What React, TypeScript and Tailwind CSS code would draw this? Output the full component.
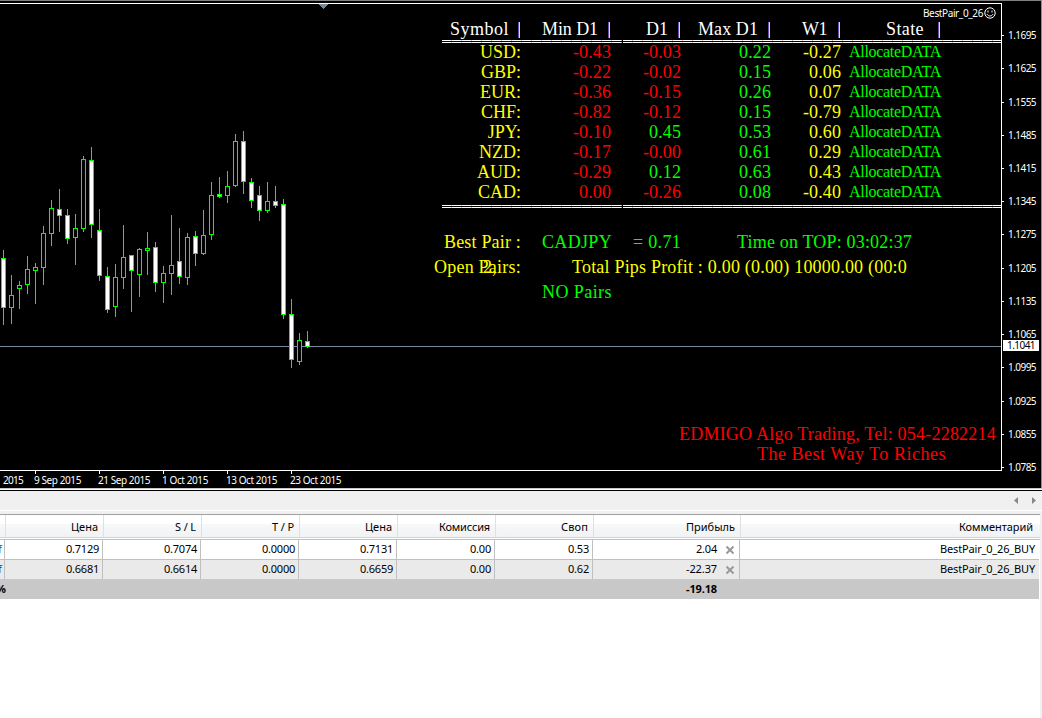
import { useLayoutEffect, useRef } from "react";

const candles = [
  [250, 325, 258, 308, 1], [275, 324, 295, 308, 0], [281, 309, 285, 289, 0], [256, 294, 269, 285, 0],
  [263, 304, 267, 271, 0], [226, 285, 233, 268, 0], [200, 246, 208, 234, 0], [189, 232, 209, 216, 1],
  [209, 244, 215, 239, 1], [214, 265, 228, 238, 0], [156, 232, 159, 229, 0], [147, 238, 160, 225, 1],
  [209, 281, 230, 276, 1], [267, 313, 276, 310, 1], [264, 317, 277, 307, 0], [225, 289, 257, 278, 0],
  [255, 312, 255, 271, 1], [248, 297, 249, 275, 0], [232, 275, 248, 251, 0], [242, 292, 247, 283, 1],
  [266, 303, 273, 283, 0], [215, 295, 265, 274, 0], [228, 284, 261, 277, 1], [233, 285, 237, 278, 0],
  [231, 266, 236, 254, 1], [210, 255, 235, 254, 0], [182, 240, 195, 235, 0], [177, 198, 194, 197, 1],
  [171, 203, 186, 196, 0], [134, 187, 141, 186, 0], [131, 194, 141, 182, 1], [178, 208, 182, 201, 1],
  [186, 221, 195, 211, 1], [182, 213, 201, 211, 0], [186, 208, 201, 206, 1], [199, 319, 204, 315, 1],
  [299, 368, 314, 360, 1], [333, 365, 340, 362, 0], [331, 348, 341, 347, 1],
];

const prices = ["1.1695", "1.1625", "1.1555", "1.1485", "1.1415", "1.1345", "1.1275", "1.1205", "1.1135", "1.1065", "1.0995", "1.0925", "1.0855", "1.0785"];
const rows = [
  ["USD:", "-0.43", "-0.03", "0.22", "-0.27"],
  ["GBP:", "-0.22", "-0.02", "0.15", "0.06"],
  ["EUR:", "-0.36", "-0.15", "0.26", "0.07"],
  ["CHF:", "-0.82", "-0.12", "0.15", "-0.79"],
  ["JPY:", "-0.10", "0.45", "0.53", "0.60"],
  ["NZD:", "-0.17", "-0.00", "0.61", "0.29"],
  ["AUD:", "-0.29", "0.12", "0.63", "0.43"],
  ["CAD:", "0.00", "-0.26", "0.08", "-0.40"],
];

/* Text tracked so that its advance fills exactly `w` pixels. */
function Fit({ w, children, className = "" }: { w: number; children: string; className?: string }) {
  const ref = useRef<HTMLSpanElement>(null);
  useLayoutEffect(() => {
    const el = ref.current!;
    el.style.letterSpacing = "0px";
    const natural = el.getBoundingClientRect().width;
    el.style.letterSpacing = `${(w - natural) / children.length}px`;
  }, [w, children]);
  return <span ref={ref} className={`inline-block shrink-0 whitespace-pre ${className}`}>{children}</span>;
}

function Head({ w, label, gap }: { w: number; label: string; gap: number }) {
  return (
    <div className="flex h-full items-center justify-end">
      <Fit w={w}>{label}</Fit>
      <span className="shrink-0" style={{ width: gap - 1 }} />
      <span className="mr-px mt-[2px] h-4 w-[2px] shrink-0 border-l border-r border-l-[#6a4fae] border-r-[#e6dcc0]" />
    </div>
  );
}

const dashes = "h-px bg-[repeating-linear-gradient(90deg,#fff_0_9px,#c9b9ad_9px_10px)]";

function Rule() {
  return (
    <div className="flex h-[3px] gap-px pl-[442px]">
      <div className="flex w-[180px] flex-col justify-between">
        <div className={dashes} />
        <div className={dashes} />
      </div>
      <div className="flex flex-1 flex-col justify-between">
        <div className={dashes} />
        <div className={dashes} />
      </div>
    </div>
  );
}

const cols = "grid grid-cols-[521px_90px_70px_90px_70px_100px] items-center";

function Panel() {
  return (
    <div className="relative w-[1001px] pt-[15px] font-['Liberation_Serif','Times_New_Roman',serif] text-[18px] leading-5">
      <div className={`${cols} mb-px h-5 text-white`}>
        <Head w={59} label="Symbol" gap={10} />
        <Head w={56} label="Min D1" gap={11} />
        <Head w={22} label="D1" gap={11} />
        <Head w={60} label="Max D1" gap={11} />
        <Head w={25} label="W1" gap={12} />
        <Head w={38} label="State" gap={15} />
      </div>
      <Rule />
      <div className="-mt-px h-[162px]">
        {rows.map((r) => (
          <div key={r[0]} className={`${cols} h-5 text-right`}>
            <span className="text-[#ffff00]">{r[0]}</span>
            <span className="text-[#ff0000]"><Fit w={r[1][0] === "-" ? 38 : 32}>{r[1]}</Fit></span>
            <span className={r[2] === "0.45" || r[2] === "0.12" ? "text-[#00ff00]" : "text-[#ff0000]"}>
              <Fit w={r[2][0] === "-" ? 38 : 32}>{r[2]}</Fit>
            </span>
            <span className="text-[#00ff00]"><Fit w={32}>{r[3]}</Fit></span>
            <span className="text-[#ffff00]"><Fit w={r[4][0] === "-" ? 38 : 32}>{r[4]}</Fit></span>
            <span className="text-[16px] text-[#00ff00]"><Fit w={92}>AllocateDATA</Fit></span>
          </div>
        ))}
      </div>
      <div className="mt-px"><Rule /></div>
      <div className="mt-6 flex h-5 text-[#00ff00]">
        <span className="w-[541px] pl-[444px] text-[#ffff00]"><Fit w={77}>Best Pair :</Fit></span>
        <span className="w-[92px] pl-px"><Fit w={70}>CADJPY</Fit></span>
        <span className="w-[104px]"><Fit w={48}>= 0.71</Fit></span>
        <Fit w={175}>Time on TOP: 03:02:37</Fit>
      </div>
      <div className="mt-[5px] flex h-5 text-[#ffff00]">
        <span className="relative w-[572px] pl-[434px]">
          <Fit w={87}>Open Pairs:</Fit>
          <span className="absolute left-[483px] top-0">2,</span>
        </span>
        <Fit w={335}>Total Pips Profit : 0.00 (0.00) 10000.00 (00:0</Fit>
      </div>
      <div className="mt-[5px] flex h-5 pl-[542px] text-[#00ff00]"><Fit w={70}>NO Pairs</Fit></div>
      <div className="mt-[122px] flex h-5 pl-[679px] text-[#ff0000]"><Fit w={317}>EDMIGO Algo Trading, Tel: 054-2282214</Fit></div>
      <div className="flex h-5 pl-[757px] text-[#ff0000]"><Fit w={189}>The Best Way To Riches</Fit></div>
    </div>
  );
}

function Chart() {
  return (
    <div className="relative h-[467px] w-[1002px] shrink-0 overflow-hidden border-b border-r border-white">
      <svg className="absolute left-0 top-0" width="1001" height="466" viewBox="0 4 1001 466" shapeRendering="crispEdges">
        <path d="M318 4h11l-5.500 5z" fill="#778899" />
        <rect x="0" y="346" width="1001" height="1" fill="#778899" />
        {candles.map(([h, l, t, b, full], i) => (
          <g key={i}>
            <rect x={3 + i * 8} y={h} width="1" height={l - h} fill="#00ff00" />
            <rect x={1 + i * 8} y={t} width="5" height={b - t} fill="#00ff00" />
            <rect x={2 + i * 8} y={t + 1} width="3" height={b - t - 2} fill={full ? "#fff" : "#000"} />
          </g>
        ))}
      </svg>
      <div className="absolute right-[5px] top-[3px] flex items-center gap-px text-[10px] leading-3 text-white">
        <Fit w={60}>BestPair_0_26</Fit>
        <svg width="12" height="12" viewBox="0 0 12 12" fill="none" stroke="#fff">
          <circle cx="6" cy="6" r="5.200" />
          <path d="M4 3.500v2M8 3.500v2M3 7.200c1.500 2.400 4.500 2.400 6 0" />
        </svg>
      </div>
      <Panel />
    </div>
  );
}

function PriceAxis() {
  return (
    <div className="relative flex-1 pt-[15px] text-[10px] text-white">
      {prices.map((p) => (
        <div key={p} className="flex h-[33.230px] items-center">
          <span className="mr-[4px] h-px w-[2px] bg-white" />
          <Fit w={28} className="leading-[9px]">{p}</Fit>
        </div>
      ))}
      <div className="absolute left-px top-[336px] flex h-[11px] w-9 items-center bg-white pl-1 text-black"><Fit w={28} className="leading-[9px]">1.1041</Fit></div>
    </div>
  );
}

const dates: [string, number][] = [["9 Sep 2015", 47], ["21 Sep 2015", 52], ["1 Oct 2015", 46], ["13 Oct 2015", 51], ["23 Oct 2015", 51]];

const headers: [string, number][] = [["Цена", 27], ["S / L", 21], ["T / P", 22], ["Цена", 27], ["Комиссия", 51], ["Своп", 27], ["Прибыль", 49], ["Комментарий", 74]];
const trades = [
  ["0.7129", "0.7074", "0.0000", "0.7131", "0.00", "0.53", "2.04"],
  ["0.6681", "0.6614", "0.0000", "0.6659", "0.00", "0.62", "-22.37"],
];
const tcols = "grid grid-cols-[98px_98px_98px_98px_98px_98px_147px_299px]";

function Cross() {
  return (
    <svg width="8" height="8" viewBox="0 0 8 8" className="mx-[5px] shrink-0" stroke="#999" strokeWidth="2">
      <path d="M.5 .5l7 7M7.500 .5l-7 7" />
    </svg>
  );
}

function Terminal() {
  return (
    <div className="flex h-[204px] w-[1040px] flex-col border-t border-[#a0a0a0] bg-white text-[11px] text-black">
      <div className={`${tcols} h-[22px] bg-[linear-gradient(#fff_40%,#f7f8fa_41%,#f1f2f4)] pl-[6px]`}>
        {headers.map(([h, w], i) => (
          <div key={i} className={`flex items-center justify-end border-[#dfe0e3] pt-0.5 ${i === 7 ? "pr-[7px]" : "border-r pr-[5px]"} ${i === 0 ? "-ml-px border-l" : ""}`}>
            <Fit w={w}>{h}</Fit>
          </div>
        ))}
      </div>
      <div className="h-[3px] border-b border-t border-b-[#c0c0c0] border-t-[#d5d5d5] bg-white" />
      {trades.map((t, r) => (
        <div key={r} className={`flex w-[1039px] ${r ? "h-[19px] bg-[#eaeaea]" : "h-5 border-b border-[#c0c0c0]"}`}>
          <div className="flex w-[5px] items-center overflow-hidden border-r border-[#c0c0c0] text-[#238]">
            <span className="-ml-[2px]">f</span>
          </div>
          <div className="grid flex-1 grid-cols-[98px_98px_98px_98px_98px_98px_147px_299px]">
            {t.map((v, i) => (
              <div key={i} className={`flex items-center justify-end border-r border-[#c0c0c0] ${i === 6 ? "" : "pr-[3px]"}`}>
                <Fit w={v.length === 6 && i < 6 ? 33 : v.length === 6 ? 31 : 21}>{v}</Fit>
                {i === 6 && <span className="pl-1"><Cross /></span>}
              </div>
            ))}
            <div className="flex items-center justify-end pr-1"><Fit w={95}>BestPair_0_26_BUY</Fit></div>
          </div>
        </div>
      ))}
      <div className="flex h-5 w-[1039px] items-center bg-[#c8c8c8] font-bold">
        <span className="-ml-1 w-[690px]">%</span>
        <Fit w={31}>-19.18</Fit>
      </div>
    </div>
  );
}

export default function App() {
  return (
    <div className="flex h-[718px] w-[1042px] flex-col overflow-hidden bg-[#f0f0f0] font-['Noto_Sans','Open_Sans',sans-serif]">
      <div className="flex h-[488px] flex-col border-r border-[#8c8c8c] bg-black">
        <div className="mb-[2px] h-px bg-[#808080]" />
        <div className="h-px w-[1002px] bg-white" />
        <div className="flex h-[467px]">
          <Chart />
          <PriceAxis />
        </div>
        <div className="flex h-[17px] text-[10px] leading-[18px] text-white">
          <span className="w-[34px] pl-[3px]"><Fit w={20}>2015</Fit></span>
          {dates.map(([d, w]) => (
            <div key={d} className="relative w-16">
              <span className="absolute left-[1px] top-0 h-[3px] w-px bg-white" />
              <Fit w={w}>{d}</Fit>
            </div>
          ))}
        </div>
      </div>
      <div className="h-[3px] border-b border-t border-b-black border-t-[#c8c8c8] bg-white" />
      <div className="flex h-[20px] items-center justify-end border-b border-white pr-[6px]">
        <svg width="22" height="7" viewBox="0 0 22 7" fill="#888"><path d="M4 0v7L0 3.500zM18 0v7l4-3.500z" /></svg>
      </div>
      <div className="h-[3px]" />
      <Terminal />
    </div>
  );
}
